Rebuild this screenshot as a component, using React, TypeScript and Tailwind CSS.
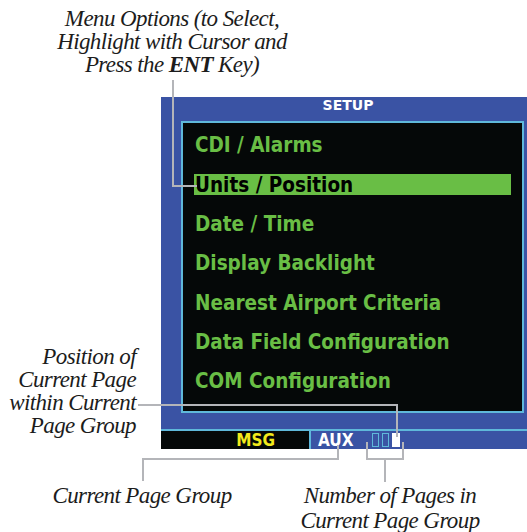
const menuItems = [
  "CDI / Alarms",
  "Units / Position",
  "Date / Time",
  "Display Backlight",
  "Nearest Airport Criteria",
  "Data Field Configuration",
  "COM Configuration",
];

const selected = 1;

function Leader({ className }: { className: string }) {
  return <span className={"absolute bg-[#b4b5b9] " + className} />;
}

export default function App() {
  return (
    <div className="relative w-[527px] h-[532px] overflow-hidden bg-white text-[#1c1c1c] font-['Liberation_Serif',serif] text-[23px] tracking-[-0.6px]">
      {/* top caption */}
      <div className="h-[97px] w-[344px] pt-[7px] text-center leading-[23px] italic">
        <p>Menu Options (to Select,</p>
        <p>Highlight with Cursor and</p>
        <p>
          Press the <b className="font-bold">ENT</b> Key)
        </p>
      </div>

      {/* unit screen */}
      <div className="ml-[161px] flex h-[352px] w-[366px] flex-col bg-[#3a53a4] tracking-normal">
        <div className="h-[24px] pl-[8px] text-center text-[14px] leading-[16px] font-bold text-white font-['DejaVu_Sans',sans-serif]">
          SETUP
        </div>
        <div className="ml-[20px] h-[292px] w-[343px] border-2 border-[#5fb8da] bg-[#050808] pt-[3px] font-['DejaVu_Sans_Condensed','DejaVu_Sans',sans-serif] text-[20.5px] font-bold">
          {menuItems.map((item, i) => (
            <div key={item} className="flex h-[39.3px] items-center px-[11px]">
              {i === selected ? (
                <div className="flex h-[21px] w-full items-center bg-[#69be45] px-[1px] leading-none text-black">
                  {item}
                </div>
              ) : (
                <div className="px-[1px] leading-none text-[#69be45]">{item}</div>
              )}
            </div>
          ))}
        </div>
        <div className="mt-[16px] h-[2px] bg-[#5fb8da]" />
        <div className="flex h-[18px] font-['DejaVu_Sans_Condensed','DejaVu_Sans',sans-serif] text-[17px] font-bold leading-none">
          <div className="flex w-[148px] items-center justify-end bg-[#050808] pr-[34px] text-[#f2ea1c]">MSG</div>
          <div className="w-[2px] bg-[#5fb8da]" />
          <div className="flex items-center pl-[7px] text-white">
            <span>AUX</span>
            <div className="ml-[18px] flex items-center gap-[3px]">
              <span className="h-[14px] w-[7px] border-[1.5px] border-[#5fb8da]" />
              <span className="h-[14px] w-[7px] border-[1.5px] border-[#5fb8da]" />
              <span className="h-[14px] w-[8px] bg-white" />
            </div>
          </div>
        </div>
      </div>

      {/* bottom captions */}
      <div className="flex italic">
        <p className="ml-[42px] w-[200px] pt-[35px] text-center leading-[23px]">Current Page Group</p>
        <p className="ml-[48px] w-[200px] pt-[34px] text-center leading-[25px]">
          Number of Pages in
          <br />
          Current Page Group
        </p>
      </div>

      {/* left caption */}
      <p className="absolute left-0 top-[345px] w-[136px] text-right leading-[23px] italic">
        Position of
        <br />
        Current Page
        <br />
        within Current
        <br />
        Page Group
      </p>

      {/* leader lines */}
      <Leader className="left-[172px] top-[80px] h-[107px] w-[2px]" />
      <Leader className="left-[172px] top-[185px] h-[2px] w-[25px]" />

      <Leader className="left-[138px] top-[404px] h-[2px] w-[260px]" />
      <Leader className="left-[396px] top-[404px] h-[33px] w-[2px]" />

      <Leader className="left-[337px] top-[445px] h-[15px] w-[2px]" />
      <Leader className="left-[142px] top-[458px] h-[2px] w-[197px]" />
      <Leader className="left-[142px] top-[458px] h-[23px] w-[2px]" />

      <Leader className="left-[366px] top-[442px] h-[18px] w-[2px]" />
      <Leader className="left-[402px] top-[442px] h-[18px] w-[2px]" />
      <Leader className="left-[366px] top-[458px] h-[2px] w-[38px]" />
      <Leader className="left-[384px] top-[458px] h-[24px] w-[2px]" />
    </div>
  );
}
